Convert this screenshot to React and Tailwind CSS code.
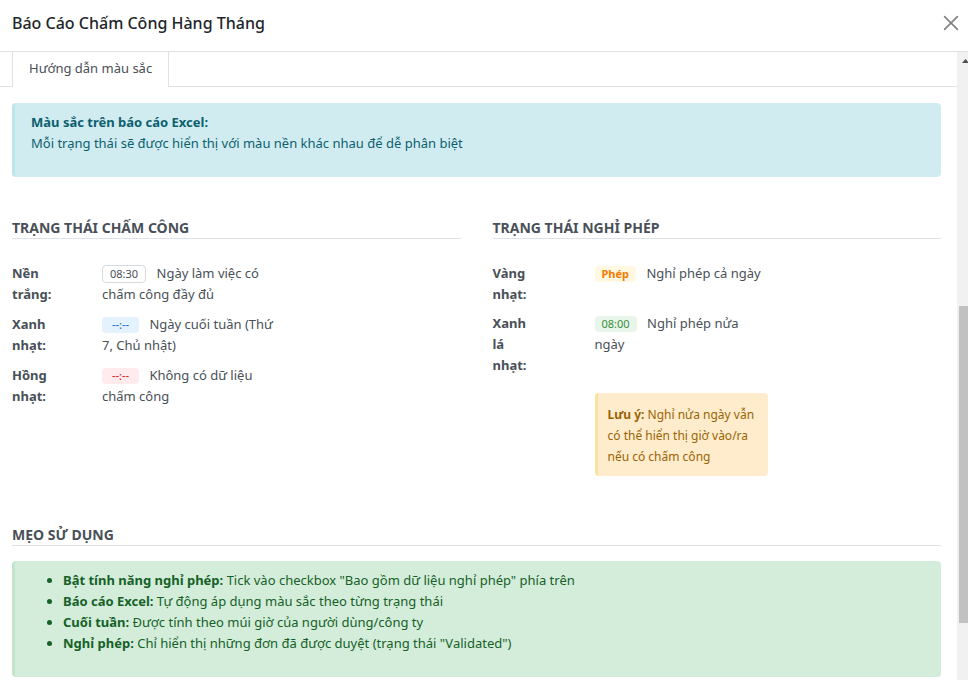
const attendance = [
  { label: "Nền trắng:", badge: "08:30", tone: "border border-[#d5d8dc] bg-white text-[#495057]", text: "Ngày làm việc có chấm công đầy đủ" },
  { label: "Xanh nhạt:", badge: "--:--", tone: "bg-[#e3f2fd] font-medium text-[#1976d2]", text: "Ngày cuối tuần (Thứ 7, Chủ nhật)" },
  { label: "Hồng nhạt:", badge: "--:--", tone: "bg-[#ffebee] font-medium text-[#d32f2f]", text: "Không có dữ liệu chấm công" },
];

const leave = [
  { label: "Vàng nhạt:", badge: "Phép", tone: "bg-[#fff8e1] font-bold text-[#f57c00]", text: "Nghỉ phép cả ngày" },
  { label: "Xanh lá nhạt:", badge: "08:00", tone: "bg-[#e8f5e9] text-[#388e3c]", text: "Nghỉ phép nửa ngày" },
];

const tips = [
  ["Bật tính năng nghỉ phép:", 'Tick vào checkbox "Bao gồm dữ liệu nghỉ phép" phía trên'],
  ["Báo cáo Excel:", "Tự động áp dụng màu sắc theo từng trạng thái"],
  ["Cuối tuần:", "Được tính theo múi giờ của người dùng/công ty"],
  ["Nghỉ phép:", 'Chỉ hiển thị những đơn đã được duyệt (trạng thái "Validated")'],
];

function SectionTitle({ children }) {
  return (
    <h2 className="border-b border-[#dee2e6] text-sm leading-[21px] font-bold text-[#495057] uppercase">
      {children}
    </h2>
  );
}

function Legend({ row, labelClass }) {
  return (
    <>
      <dt className={`font-bold ${labelClass}`}>{row.label}</dt>
      <dd>
        <span className={`mr-[7px] inline-block min-w-[37px] rounded px-[7px] text-center text-[11px] leading-4 ${row.tone}`}>
          {row.badge}
        </span>{" "}
        {row.text}
      </dd>
    </>
  );
}

export default function App() {
  return (
    <div className="flex h-screen flex-col overflow-hidden bg-white font-['Noto_Sans','Open_Sans',sans-serif] text-[13px] leading-[21px] text-[#495057]">
      <header className="flex shrink-0 items-center justify-between border-b border-[#dee2e6] pt-2 pr-2 pb-3 pl-3">
        <h1 className="text-base leading-[31px] font-medium text-[#212529]">Báo Cáo Chấm Công Hàng Tháng</h1>
        <button type="button" aria-label="Đóng" className="flex size-[18px] items-center justify-center text-[#808080]">
          <svg viewBox="0 0 18 18" className="size-[18px]" fill="none" stroke="currentColor" strokeWidth="1.6" strokeLinecap="round">
            <path d="M2.6 1.6 15.4 14.4M15.4 1.6 2.6 14.4" />
          </svg>
        </button>
      </header>

      <div className="flex min-h-0 flex-1">
        <main className="min-w-0 flex-1 overflow-hidden">
          <div role="tablist" className="flex items-stretch">
            <span className="w-3 border-b border-[#dee2e6]" />
            <button type="button" role="tab" aria-selected="true" className="border-x border-[#dee2e6] px-4 pt-1.5 pb-2">
              Hướng dẫn màu sắc
            </button>
            <span className="flex-1 border-b border-[#dee2e6]" />
          </div>

          <div className="pt-4 pr-4 pl-3">
            <div className="rounded border-l-[3px] border-[#bee5eb] bg-[#d1ecf1] px-4 pt-[9px] pb-[23px] text-[#0c5f6e]">
              <strong className="block">Màu sắc trên báo cáo Excel:</strong>
              <p>Mỗi trạng thái sẽ được hiển thị với màu nền khác nhau để dễ phân biệt</p>
            </div>

            <div className="mt-10 grid grid-cols-2 gap-x-8">
              <section>
                <SectionTitle>Trạng thái chấm công</SectionTitle>
                <dl className="mt-6 grid grid-cols-[90px_182px] gap-y-[9px]">
                  {attendance.map((row) => (
                    <Legend key={row.label} row={row} labelClass="w-14" />
                  ))}
                </dl>
              </section>

              <section>
                <SectionTitle>Trạng thái nghỉ phép</SectionTitle>
                <dl className="mt-6 grid grid-cols-[102px_173px] gap-y-2">
                  {leave.map((row) => (
                    <Legend key={row.label} row={row} labelClass="w-11" />
                  ))}
                </dl>
                <div className="mt-[17px] ml-[102px] w-[173px] rounded border-l-[3px] border-[#ffe0a3] bg-[#ffeccc] pt-[11px] pr-1.5 pb-[9px] pl-2.5 text-xs leading-[21px] text-[#996404]">
                  <strong>Lưu ý:</strong> Nghỉ nửa ngày vẫn có thể hiển thị giờ vào/ra nếu có chấm công
                </div>
              </section>
            </div>

            <section className="mt-12">
              <SectionTitle>Mẹo sử dụng</SectionTitle>
              <ul className="mt-[15px] list-disc rounded border-l-[3px] border-[#c3e6cb] bg-[#d4edda] pt-[9px] pr-4 pb-[23px] pl-12 text-[#156128]">
                {tips.map(([title, text]) => (
                  <li key={title}>
                    <strong>{title}</strong> {text}
                  </li>
                ))}
              </ul>
            </section>
          </div>
        </main>

        <div aria-hidden="true" className="flex w-[11px] shrink-0 flex-col overflow-hidden bg-[#f1f1f1] pt-[7px]">
          <svg viewBox="0 0 7 4" className="ml-[5px] h-1 w-[7px] shrink-0" fill="#505050">
            <path d="M3.5 0 7 4H0Z" />
          </svg>
          <div className="grow-[243]" />
          <div className="ml-0.5 grow-[317] bg-[#c1c1c1]" />
          <div className="grow-[57]" />
        </div>
      </div>
    </div>
  );
}
